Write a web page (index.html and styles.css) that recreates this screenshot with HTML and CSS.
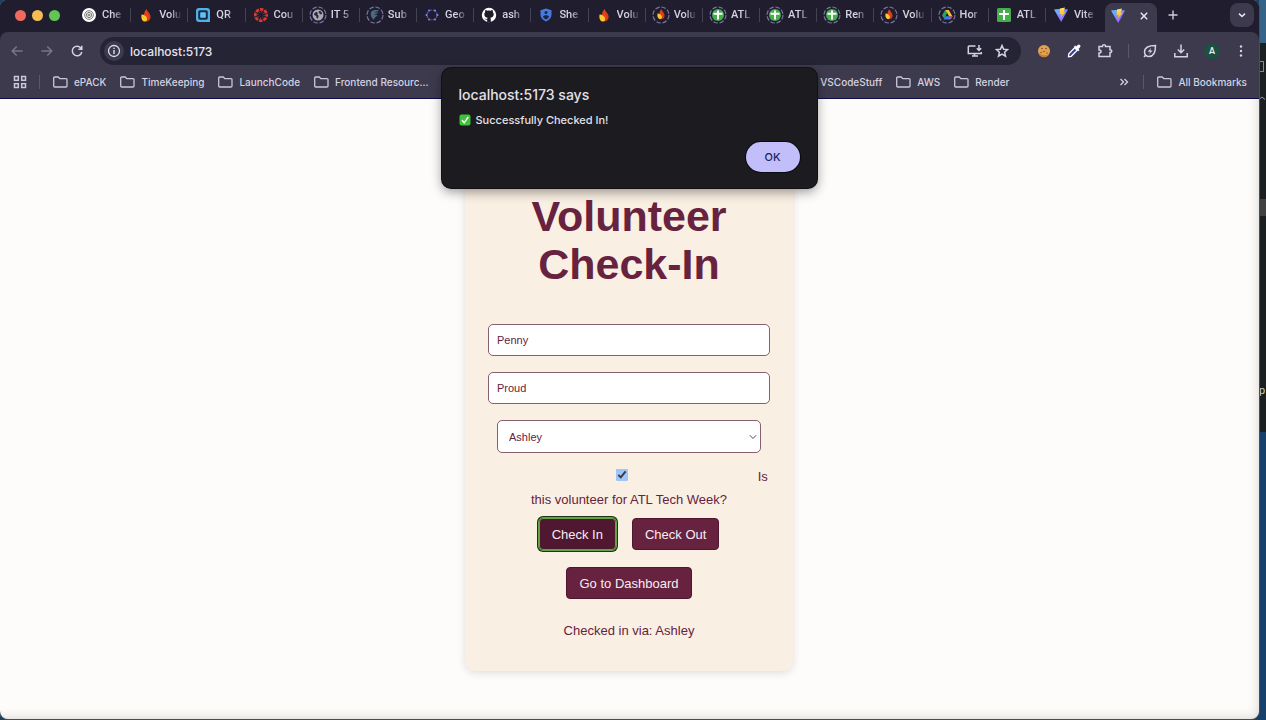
FILE: index.html
```html
<!DOCTYPE html>
<html lang="en">
<head>
<meta charset="utf-8">
<title>Volunteer Check-In</title>
<link rel="stylesheet" href="styles.css">
</head>
<body>
<svg class="defs" aria-hidden="true">
  <defs>
    <linearGradient id="vg" x1="0" y1="0" x2="1" y2="1"><stop offset="0" stop-color="#55c5ff"/><stop offset="1" stop-color="#b54aff"/></linearGradient>
    <linearGradient id="vy" x1="0" y1="0" x2="0" y2="1"><stop offset="0" stop-color="#ffe75a"/><stop offset="1" stop-color="#ffa51e"/></linearGradient>
    <symbol id="ring" viewBox="0 0 18 18"><circle cx="9" cy="9" r="8" fill="none" stroke="#7775a6" stroke-width="1.2" stroke-dasharray="4.6 1.7"/></symbol>
    <symbol id="flame" viewBox="0 0 18 18"><path d="M9.500 3C10 5.500 13.600 7 13.600 11a4.600 4.600 0 0 1-4.600 4.600V7z" fill="#d93a16"/><path d="M9.500 3C8 5 7 6.500 7 9l2 6.600 3-4z" fill="#e0431a"/><path d="M4.600 8.500C6 8 9 9.500 10 12c.5 2-.5 3.500-2 3.600C5 15.500 3.800 12 4.600 8.500z" fill="#ffc72e"/></symbol>
    <symbol id="sheet" viewBox="0 0 18 18"><path d="M9 4.500v9M4.500 7.800h9" stroke="#fff" stroke-width="2" fill="none"/></symbol>
    <symbol id="vite" viewBox="0 0 18 18"><path d="M2 3.500l7-.8 7 .8L9.200 16z" fill="url(#vg)"/><path d="M8 2.500l5-1-1.500 4.500 2-.3L8.700 12l.8-4L7.500 8.400z" fill="url(#vy)"/></symbol>
    <symbol id="folder" viewBox="0 0 15 12"><path d="M1.700 1h3.600l1.500 1.600h6.200a1 1 0 0 1 1 1V10a1 1 0 0 1-1 1H1.700a1 1 0 0 1-1-1V2a1 1 0 0 1 1-1z" fill="none" stroke="currentColor" stroke-width="1.300"/></symbol>
  </defs>
</svg>
<div class="desktop">
  <div class="window">
    <header class="chrome">
      <div class="tabstrip">
        <div class="lights"><span class="light red"></span><span class="light amber"></span><span class="light green"></span></div>
        <nav class="tabs" aria-label="Open tabs">
          <a class="tab" href="#"><svg class="fav" viewBox="0 0 18 18"><circle cx="9" cy="9" r="7" fill="#fff"/><g fill="none" stroke="#555" stroke-width=".8"><circle cx="9" cy="9" r="4.300"/><path d="M9 6.200l2.400 1.400v2.800L9 11.800l-2.400-1.400V7.600z"/><circle cx="9" cy="9" r="1"/></g></svg><span class="label">Che</span></a>
          <a class="tab" href="#"><svg class="fav"><use href="#flame"/></svg><span class="label">Volu</span></a>
          <a class="tab" href="#"><svg class="fav" viewBox="0 0 18 18"><path d="M5 2h8a3 3 0 0 1 3 3v11H5a3 3 0 0 1-3-3V5a3 3 0 0 1 3-3z" fill="#4eb1ea"/><path d="M6 4.200h6a1.800 1.800 0 0 1 1.800 1.800v6A1.800 1.800 0 0 1 12 13.800H6A1.800 1.800 0 0 1 4.200 12V6A1.800 1.800 0 0 1 6 4.200z" fill="#1b2c42"/><rect x="6.200" y="6.200" width="5.600" height="5.600" rx=".8" fill="#5ec3fa"/></svg><span class="label">QR</span></a>
          <a class="tab" href="#"><svg class="fav" viewBox="0 0 18 18"><circle cx="9" cy="9" r="5.700" fill="none" stroke="#d83a32" stroke-width="2.700" stroke-dasharray="3.480 1" stroke-dashoffset="1.740"/><circle cx="9" cy="9" r="3.200" fill="none" stroke="#d83a32" stroke-width="1" stroke-dasharray="1 1.510"/></svg><span class="label">Cou</span></a>
          <a class="tab" href="#"><svg class="fav" viewBox="0 0 18 18"><use href="#ring"/><circle cx="9" cy="9" r="5.500" fill="#aaa9b3"/><path d="M5 8c2-3 4-2 3.500-.5S10 9 9.500 11s-2 2-2 0S5 10 5 8zM10 5c2 0 3 1 3 3-1 0-1 1-2 0s-2-2-1-3z" fill="#292838"/></svg><span class="label">IT 5</span></a>
          <a class="tab" href="#"><svg class="fav" viewBox="0 0 18 18"><use href="#ring"/><path d="M5 6c2-2.500 5-2 8-2-1 1.500-3 2-5 2 1.500 1 3 .5 4.500.3C11.500 8 9.500 8.500 8 8c1 1.200 2 1.200 3.500 1-1 2-3 1.500-3.500 5C5.500 12 4 9 5 6z" fill="#486a83"/></svg><span class="label">Sub</span></a>
          <a class="tab" href="#"><svg class="fav" viewBox="0 0 18 18"><circle cx="9" cy="9" r="5" fill="none" stroke="#5757a5" stroke-width="1.200" stroke-dasharray="3 1"/><g fill="#8287ff"><circle cx="6" cy="4.600" r="1"/><circle cx="12" cy="4.600" r="1"/><circle cx="14.500" cy="9" r="1"/><circle cx="12" cy="13.400" r="1"/><circle cx="6" cy="13.400" r="1"/><circle cx="3.500" cy="9" r="1"/></g></svg><span class="label">Geo</span></a>
          <a class="tab" href="#"><svg class="fav" viewBox="0 0 18 18"><circle cx="9" cy="9" r="7.200" fill="#fff"/><path d="M7.200 16v-2.200c-2 .3-2.300-1.300-3.200-1.500 1.300-.3 1.700 1.200 3.200.7 0-.6.200-.9.500-1.200-2-.3-3.400-1.200-3.400-3.600 0-1 .3-1.700.9-2.300-.2-.7-.1-1.400.2-2 .8 0 1.500.4 2 .8a7 7 0 0 1 3.200 0c.6-.4 1.300-.8 2-.8.300.6.400 1.300.2 2 .6.600.9 1.300.9 2.300 0 2.400-1.400 3.300-3.400 3.600.3.400.5.900.5 1.500V16z" fill="#1f1d2b"/></svg><span class="label">ash</span></a>
          <a class="tab" href="#"><svg class="fav" viewBox="0 0 18 18"><path d="M9 2.500l5.500 1.800v4.200c0 3.300-2.300 5.700-5.500 7-3.200-1.300-5.500-3.700-5.500-7V4.300z" fill="#477be0"/><circle cx="9" cy="6.600" r="1.500" fill="#1d2445"/><path d="M6 11c0-2.200 6-2.200 6 0-.8 1.200-1.800 2-3 2.600C7.800 13 6.800 12.200 6 11z" fill="#1d2445"/></svg><span class="label">She</span></a>
          <a class="tab" href="#"><svg class="fav"><use href="#flame"/></svg><span class="label">Volu</span></a>
          <a class="tab" href="#"><svg class="fav" viewBox="0 0 18 18"><use href="#ring"/><use href="#flame" x="2" y="1" width="14" height="14"/></svg><span class="label">Volu</span></a>
          <a class="tab" href="#"><svg class="fav" viewBox="0 0 18 18"><use href="#ring"/><circle cx="9" cy="9" r="6" fill="#45ad4b"/><use href="#sheet"/></svg><span class="label">ATL</span></a>
          <a class="tab" href="#"><svg class="fav" viewBox="0 0 18 18"><use href="#ring"/><circle cx="9" cy="9" r="6" fill="#45ad4b"/><use href="#sheet"/></svg><span class="label">ATL</span></a>
          <a class="tab" href="#"><svg class="fav" viewBox="0 0 18 18"><use href="#ring"/><circle cx="9" cy="9" r="6" fill="#45ad4b"/><use href="#sheet"/></svg><span class="label">Ren</span></a>
          <a class="tab" href="#"><svg class="fav" viewBox="0 0 18 18"><use href="#ring"/><use href="#flame" x="2" y="1" width="14" height="14"/></svg><span class="label">Volu</span></a>
          <a class="tab" href="#"><svg class="fav" viewBox="0 0 18 18"><use href="#ring"/><path d="M7.200 4h3.600L6.200 12.500 4 9.500z" fill="#2da557"/><path d="M7.600 4h3.200l3.700 6.500h-3.300z" fill="#fbc02d"/><path d="M11 10.200h3.500L12.500 13.500h-7l1.800-3.300z" fill="#3d7cf0"/><path d="M11.200 10.300h3.300l-1.700 2.900z" fill="#e8453c"/></svg><span class="label">Hor</span></a>
          <a class="tab" href="#"><svg class="fav" viewBox="0 0 18 18"><rect x="2" y="2" width="14" height="14" rx="1.500" fill="#45ad4b"/><path d="M9 4v10M4 8h10" stroke="#fff" stroke-width="2"/></svg><span class="label">ATL</span></a>
          <a class="tab last" href="#"><svg class="fav"><use href="#vite"/></svg><span class="label">Vite</span></a>
        </nav>
        <div class="tab-active">
          <svg class="fav"><use href="#vite"/></svg>
          <button class="plain" aria-label="Close tab"><svg width="10" height="10" viewBox="0 0 10 10"><path d="M1.800 1.800l6.400 6.400M8.200 1.800L1.800 8.200" stroke="#e6e3f2" stroke-width="1.500"/></svg></button>
        </div>
        <button class="plain newtab" aria-label="New tab"><svg width="12" height="12" viewBox="0 0 12 12"><path d="M6 1.500v9M1.500 6h9" stroke="#cfcce0" stroke-width="1.400"/></svg></button>
        <button class="plain search-tabs" aria-label="Search tabs"><svg width="10" height="10" viewBox="0 0 10 10"><path d="M2 3.700l3 2.800 3-2.800" fill="none" stroke="#e6e3f2" stroke-width="1.600"/></svg></button>
      </div>
      <div class="toolbar">
        <button class="plain nav dim" aria-label="Back"><svg width="14" height="14" viewBox="0 0 14 14"><path d="M12.500 7H2.500M6.700 2.500L2.200 7l4.500 4.500"/></svg></button>
        <button class="plain nav dim" aria-label="Forward"><svg width="14" height="14" viewBox="0 0 14 14"><path d="M1.500 7h10M7.300 2.500L11.800 7l-4.500 4.500"/></svg></button>
        <button class="plain nav" aria-label="Reload"><svg width="14" height="14" viewBox="0 0 14 14"><path d="M11.300 4.600A4.800 4.800 0 1 0 11.800 8M11.800 1.800v3.400H8.400"/></svg></button>
        <div class="address">
          <span class="info"><svg width="14" height="14" viewBox="0 0 14 14"><circle cx="7" cy="7" r="5.500" fill="none" stroke="#dedbea" stroke-width="1.300"/><path d="M7 6v4M7 3.800v1.300" stroke="#dedbea" stroke-width="1.400"/></svg></span>
          <input class="url" type="text" aria-label="Address" value="localhost:5173">
          <button class="plain nav" aria-label="Install app"><svg width="16" height="14" viewBox="0 0 16 14"><path d="M8.500 2H2.200a.9.900 0 0 0-.9.900v6.600h13V8M5 12h6M12 1v5M9.800 4.200L12 6.400l2.200-2.200M7.500 9.500v2"/></svg></button>
          <button class="plain nav" aria-label="Bookmark this page"><svg width="14" height="14" viewBox="0 0 14 14"><path d="M7 1.500l1.600 3.700 4 .4-3 2.700.9 3.900L7 10.100l-3.500 2.100.9-3.900-3-2.700 4-.4z"/></svg></button>
        </div>
        <div class="extensions">
          <svg width="14" height="14" viewBox="0 0 14 14"><circle cx="7" cy="7" r="6" fill="#e3a356"/><path d="M1.500 8.500a5.500 5.500 0 0 0 10.500 1.500 8 8 0 0 1-10.500-1.500z" fill="#c97f38"/><g fill="#85481f"><circle cx="5" cy="4.500" r=".8"/><circle cx="9" cy="4.600" r=".8"/><circle cx="7" cy="7.500" r=".8"/><circle cx="10" cy="9" r=".7"/><circle cx="4" cy="8.500" r=".7"/></g></svg>
          <svg width="16" height="16" viewBox="0 0 16 16"><path d="M8.700 4.800l2.500 2.500-6 6-2.700.5.300-2.900z" fill="#2f3fae" stroke="#fff" stroke-width="1.300"/><path d="M8 3.500L9.200 2.500l1 1 1.500-1.500a1.500 1.500 0 0 1 2.300 2.300L12.500 6l1 1-1.200 1.200z" fill="#fff"/></svg>
          <svg class="line" width="16" height="16" viewBox="0 0 16 16"><path d="M2 3.500h3.500c-.2-2.500 3.200-2.500 3 0h4.500v3.300c2.300-.2 2.300 2.900 0 2.700v4H2v-3.500c2.700 0 2.700-3 0-3z"/></svg>
          <span class="divider"></span>
          <svg class="line" width="16" height="16" viewBox="0 0 16 16"><path d="M13.500 2.500C8 2.500 2.500 4 2.500 9a4.400 4.400 0 0 0 4.500 4.500c5 0 6.500-5.500 6.500-11zM2 14l1.500-1.800"/><path d="M9.200 4.800L5.700 8.800h2.500L7 11.500l3.700-4H8.200z" fill="#d5d2e2" stroke="none"/></svg>
          <svg class="line" width="16" height="16" viewBox="0 0 16 16"><path d="M8 1.500v8M4.800 6.500L8 9.700l3.200-3.200M1.800 10v3.700h12.400V10"/></svg>
          <span class="avatar">A</span>
          <svg width="12" height="14" viewBox="0 0 12 14" fill="#d5d2e2"><circle cx="6" cy="2.500" r="1.200"/><circle cx="6" cy="7" r="1.200"/><circle cx="6" cy="11.500" r="1.200"/></svg>
        </div>
      </div>
      <nav class="bookmarks" aria-label="Bookmarks">
        <svg class="apps" width="14" height="14" viewBox="0 0 14 14"><g fill="none" stroke="#cac8d6" stroke-width="1.500"><rect x="1.500" y="1.500" width="3.800" height="3.800"/><rect x="8.700" y="1.500" width="3.800" height="3.800"/><rect x="1.500" y="8.700" width="3.800" height="3.800"/><rect x="8.700" y="8.700" width="3.800" height="3.800"/></g></svg>
        <span class="divider"></span>
        <a class="mark" href="#"><svg class="dir"><use href="#folder"/></svg>ePACK</a>
        <a class="mark" href="#"><svg class="dir"><use href="#folder"/></svg>TimeKeeping</a>
        <a class="mark" href="#"><svg class="dir"><use href="#folder"/></svg>LaunchCode</a>
        <a class="mark" href="#"><svg class="dir"><use href="#folder"/></svg>Frontend Resourc...</a>
        <div class="marks-end">
          <a class="mark" href="#"><svg class="dir"><use href="#folder"/></svg>VSCodeStuff</a>
          <a class="mark" href="#"><svg class="dir"><use href="#folder"/></svg>AWS</a>
          <a class="mark" href="#"><svg class="dir"><use href="#folder"/></svg>Render</a>
        </div>
        <button class="plain" aria-label="More bookmarks"><svg width="10" height="10" viewBox="0 0 10 10"><path d="M1.500 2l3 3-3 3M5.500 2l3 3-3 3" fill="none" stroke="#d5d2e2" stroke-width="1.300"/></svg></button>
        <span class="divider"></span>
        <a class="mark" href="#"><svg class="dir"><use href="#folder"/></svg>All Bookmarks</a>
      </nav>
    </header>
    <main class="page">
      <form class="card">
        <h1 class="title">Volunteer Check-In</h1>
        <input class="field" type="text" aria-label="First name" value="Penny">
        <input class="field" type="text" aria-label="Last name" value="Proud">
        <div class="select-wrap">
          <select class="field select" aria-label="Checked in by"><option>Ashley</option></select>
          <svg class="caret" width="8" height="6" viewBox="0 0 8 6"><path d="M.8 1.200L4 4.500l3.200-3.300" fill="none" stroke="#6b4052" stroke-width="1"/></svg>
        </div>
        <label class="check"><input class="box" type="checkbox" checked> Is this volunteer for ATL Tech Week?</label>
        <div class="actions">
          <button class="btn focused" type="button">Check In</button>
          <button class="btn" type="button">Check Out</button>
          <button class="btn" type="button">Go to Dashboard</button>
        </div>
        <p class="status">Checked in via: Ashley</p>
      </form>
    </main>
    <dialog class="alert" open aria-labelledby="alert-title">
      <h2 class="alert-title" id="alert-title">localhost:5173 says</h2>
      <p class="alert-text"><svg width="12" height="12" viewBox="0 0 12 12"><rect x=".5" y=".5" width="11" height="11" rx="2" fill="#3fc13c"/><path d="M3 6.300l2.200 2.500L9.300 2.800" fill="none" stroke="#fff" stroke-width="1.500"/></svg>Successfully Checked In!</p>
      <button class="ok" type="button">OK</button>
    </dialog>
  </div>
  <aside class="behind" aria-hidden="true">
    <div class="editor"><span class="editor-box"></span><svg width="6" height="5" viewBox="0 0 6 5"><path d="M0 3.500l3-2.500 3 2.500" fill="none" stroke="#999"/></svg><span class="editor-row"></span><span class="editor-letter">p</span></div>
  </aside>
</div>
</body>
</html>
```
FILE: styles.css
```css
* { box-sizing: border-box; }

body {
  margin: 0;
  font-family: Roboto, Inter, sans-serif;
  font-size: 11px;
  color: #d5d2e2;
}

.defs { position: absolute; width: 0; height: 0; }
a { color: inherit; text-decoration: none; }

.plain {
  display: flex;
  align-items: center;
  justify-content: center;
  padding: 0;
  border: 0;
  background: none;
  color: inherit;
}

.desktop {
  display: flex;
  height: 100vh;
  padding-bottom: 1px;
  overflow: hidden;
  background: #17406a;
}

.window {
  position: relative;
  display: flex;
  flex: 1;
  flex-direction: column;
  min-width: 0;
  overflow: hidden;
  border-radius: 8px;
  background: #201e2e;
  box-shadow: 0 0 0 1px #4d4d50;
}

/* Tab strip */
.tabstrip {
  display: flex;
  align-items: center;
  height: 32px;
  padding: 0 5px 2px 0;
  background: #201e2e;
}

.lights { display: flex; gap: 6px; padding: 0 14px 0 15px; }
.light { width: 11px; height: 11px; border-radius: 50%; }
.red { background: #ee6a5f; }
.amber { background: #f5bd4f; }
.green { background: #61c454; }

.tabs { display: flex; flex: 1; min-width: 0; }

.tab {
  display: flex;
  flex: 1;
  align-items: center;
  gap: 4px;
  min-width: 0;
  height: 14px;
  padding: 0 4px 0 6px;
  border-right: 1px solid #444255;
}
.tab.last { border-color: transparent; }

.fav { flex: none; width: 18px; height: 18px; }

.label {
  flex: 1;
  white-space: nowrap;
  font-weight: 500;
  line-height: 14px;
  -webkit-mask-image: linear-gradient(90deg, #000 45%, transparent 95%);
  mask-image: linear-gradient(90deg, #000 45%, transparent 95%);
}

.tab-active {
  display: flex;
  align-items: center;
  align-self: flex-end;
  justify-content: space-between;
  width: 52px;
  height: 29px;
  padding: 0 8px 4px 4px;
  margin: 0 0 -2px 2px;
  border-radius: 8px 8px 0 0;
  background: #3c3a4c;
}

.newtab { margin-left: 10px; }
.search-tabs {
  width: 24px;
  height: 24px;
  margin-left: 51px;
  border-radius: 8px;
  background: #3c3a4c;
}

/* Toolbar */
.toolbar {
  display: flex;
  align-items: center;
  gap: 16px;
  height: 38px;
  padding: 0 12px 0 10px;
  border-radius: 8px 8px 0 0;
  background: #3c3a4c;
}

.nav svg, .line {
  fill: none;
  stroke: #d5d2e2;
  stroke-width: 1.5;
}
.dim svg { stroke: #77758a; }

.address {
  display: flex;
  flex: 1;
  align-items: center;
  gap: 12px;
  height: 28px;
  padding: 0 12px 0 4px;
  border-radius: 14px;
  background: #252435;
}

.info {
  display: flex;
  align-items: center;
  justify-content: center;
  width: 20px;
  height: 20px;
  border-radius: 50%;
  background: #3c3a4c;
}

.url {
  flex: 1;
  min-width: 0;
  padding: 0;
  margin-left: -6px;
  border: 0;
  background: none;
  color: #e6e3f0;
  font: 500 12px Inter, sans-serif;
  outline: 0;
}

.extensions { display: flex; align-items: center; gap: 15px; }
.divider { width: 1px; height: 14px; background: #5a586b; }
.extensions .divider { margin-right: -2px; }

.avatar {
  width: 16px;
  height: 16px;
  border-radius: 50%;
  background: #1d4f42;
  color: #e8f2ee;
  font-size: 9px;
  font-weight: 600;
  line-height: 16px;
  text-align: center;
}

/* Bookmarks bar */
.bookmarks {
  display: flex;
  align-items: center;
  gap: 14px;
  height: 29px;
  padding: 0 12px 4px 13px;
  border-bottom: 1px solid #0e0b48;
  background: #3c3a4c;
  font: 500 10px Inter, sans-serif;
}
.apps { margin-right: -2px; }
.bookmarks .divider { margin-right: -1px; }

.mark { display: flex; align-items: center; gap: 6px; white-space: nowrap; }
.dir { width: 15px; height: 12px; color: #cac8d6; }
.marks-end { display: flex; gap: 14px; margin: 0 96px 0 auto; }

/* Page */
.page {
  display: flex;
  flex: 1;
  align-items: flex-start;
  justify-content: center;
  padding: 41px 1px 0 0;
  background: #fdfcfa;
  box-shadow: inset -8px -8px 12px -8px #d5d3d0;
  font-family: "Liberation Sans", Arial, sans-serif;
  color: #672240;
}

.card {
  display: flex;
  flex-direction: column;
  align-items: center;
  gap: 16px;
  width: 328px;
  padding: 52px 23px 32px;
  border-radius: 10px;
  background: #faefe3;
  box-shadow: 0 2px 8px rgba(0, 0, 0, 0.12);
}

.title {
  margin: 0 0 20px;
  font-size: 43px;
  line-height: 48px;
  text-align: center;
}

.field {
  width: 100%;
  height: 32px;
  padding: 0 8px;
  border: 1px solid #87606f;
  border-radius: 5px;
  background: #fff;
  color: #672240;
  font: 11px "Liberation Sans", Arial, sans-serif;
}

.select-wrap { position: relative; width: 264px; }
.select {
  display: block;
  height: 33px;
  padding: 0 11px;
  appearance: none;
}
.caret { position: absolute; top: 14px; right: 4px; }

.check {
  margin-top: -4px;
  font-size: 13px;
  line-height: 23px;
  text-align: center;
}
.box {
  width: 264px;
  height: 12px;
  margin: 0;
  accent-color: #9fc6fc;
}

.actions {
  display: flex;
  flex-wrap: wrap;
  justify-content: center;
  gap: 17px 16px;
  margin-top: -9px;
}

.btn {
  height: 32px;
  padding: 0 12px;
  border: 1px solid #4f1630;
  border-radius: 4px;
  background: #672240;
  color: #f7edf0;
  font: 13px "Liberation Sans", Arial, sans-serif;
}
.focused {
  border-color: #62a346;
  background: #4f1730;
  outline: 1px solid #62a346;
  box-shadow: 0 0 0 2px #1c3413;
}

.status { margin: 8px 0 0; font-size: 13px; line-height: 16px; }

/* Alert */
.alert {
  position: absolute;
  inset: 68px 1px auto 0;
  display: flex;
  flex-direction: column;
  width: 375px;
  padding: 17px 17px 16px;
  margin: 0 auto;
  border: 0;
  border-radius: 9px;
  background: #1c1b20;
  color: #e3e1e8;
  box-shadow: 0 0 0 1px #111015, 0 4px 12px rgba(0, 0, 0, 0.4);
}
.alert-title { margin: 0; font: 500 14px/20px Inter, sans-serif; }
.alert-text {
  display: flex;
  align-items: center;
  gap: 5px;
  margin: 7px 0 14px;
  font: 500 11px/16px Inter, sans-serif;
}
.ok {
  align-self: flex-end;
  width: 54px;
  height: 30px;
  border: 0;
  border-radius: 15px;
  background: #c1befa;
  color: #25235a;
  font: 500 11px Inter, sans-serif;
  box-shadow: 0 0 0 1px #0b0a12;
}

/* Windows behind */
.behind {
  width: 7px;
  padding-top: 43px;
  background: linear-gradient(#356488 0 43px, #17406a 43px);
}
.editor {
  display: flex;
  flex-direction: column;
  height: 389px;
  padding-top: 18px;
  overflow: hidden;
  background: #1b1f20;
  color: #d0d0d0;
}
.editor-box { width: 5px; height: 11px; margin-bottom: 24px; border: 1px solid #888; border-left: 0; }
.editor-row { height: 17px; margin-top: 98px; background: #414141; }
.editor-letter { margin-top: 168px; line-height: 14px; }
```
